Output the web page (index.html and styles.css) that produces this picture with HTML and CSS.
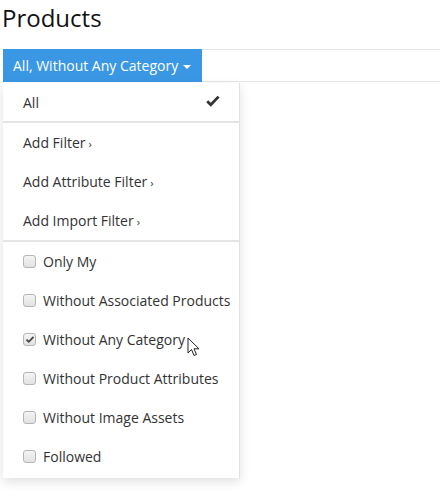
FILE: index.html
```html
<!DOCTYPE html>
<html>
<head>
<meta charset="utf-8">
<link rel="stylesheet" href="styles.css">
</head>
<body>
<div class="page">
  <h1 class="title">Products</h1>
  <div class="toolbar">
    <button class="filter-btn">All, Without Any Category <span class="caret"></span></button>
  </div>
  <div class="menu">
    <div class="menu-top">
      <span>All</span>
      <svg class="check" width="14" height="12" viewBox="0 0 14 12"><path d="M1.2 6.3 L4.8 9.8 L12.6 1.6" fill="none" stroke="#333" stroke-width="2.8" stroke-linejoin="miter"/></svg>
    </div>
    <div class="menu-section">
      <div class="item">Add Filter <span class="arrow">›</span></div>
      <div class="item">Add Attribute Filter <span class="arrow">›</span></div>
      <div class="item">Add Import Filter <span class="arrow">›</span></div>
    </div>
    <div class="menu-section">
      <div class="item"><span class="box"></span>Only My</div>
      <div class="item"><span class="box"></span>Without Associated Products</div>
      <div class="item"><span class="box checked"><svg width="10" height="9" viewBox="0 0 10 9"><path d="M1.5 4.6 L3.8 6.8 L8.5 1.8" fill="none" stroke="#444" stroke-width="1.8"/></svg></span>Without Any Category</div>
      <div class="item"><span class="box"></span>Without Product Attributes</div>
      <div class="item"><span class="box"></span>Without Image Assets</div>
      <div class="item"><span class="box"></span>Followed</div>
    </div>
  </div>
  <svg class="cursor" width="14" height="22" viewBox="0 0 14 22"><path d="M1 1 L1 16 L4.5 12.5 L7 18.5 L9.5 17.5 L7 11.8 L12 11.8 Z" fill="#fff" stroke="#222" stroke-width="1" stroke-linejoin="miter"/></svg>
</div>
</body>
</html>
```
FILE: styles.css
```css
html, body {
  margin: 0;
  padding: 0;
  background: #fff;
}
body {
  font-family: "Open Sans", "Noto Sans", sans-serif;
  color: #333;
}
.page {
  position: relative;
  width: 440px;
  height: 499px;
  overflow: hidden;
}
.title {
  margin: 0;
  padding: 3px 0 0 2px;
  height: 49px;
  box-sizing: border-box;
  font-size: 24px;
  font-weight: 400;
  line-height: 30px;
  color: #111;
}
.toolbar {
  margin-left: 3px;
  height: 33px;
  box-sizing: border-box;
  border-top: 1px solid #e6e6e6;
  border-bottom: 1px solid #e6e6e6;
  display: flex;
  align-items: stretch;
}
.filter-btn {
  margin: -1px 0 -1px 0;
  width: 199px;
  border: 0;
  padding: 0 0 0 10px;
  text-align: left;
  background: #3a97e4;
  color: #fff;
  font-family: "Open Sans", "Noto Sans", sans-serif;
  font-size: 14px;
  display: flex;
  align-items: center;
  gap: 5px;
}
.caret {
  display: inline-block;
  width: 0;
  height: 0;
  border-left: 4px solid transparent;
  border-right: 4px solid transparent;
  border-top: 4px solid #fff;
  margin-top: 2px;
}
.menu {
  position: absolute;
  left: 3px;
  top: 83px;
  width: 237px;
  height: 395px;
  box-sizing: border-box;
  background: #fff;
  border-right: 1px solid #e2e2e2;
  box-shadow: 0 4px 10px rgba(0,0,0,0.12);
  font-size: 14px;
  color: #333;
}
.menu-top {
  height: 40px;
  display: flex;
  align-items: center;
  justify-content: space-between;
  padding: 0 19px 0 20px;
  border-bottom: 2px solid #e5e5e5;
  box-sizing: border-box;
}
.check {
  margin-top: -3px;
}
.menu-section {
  border-bottom: 2px solid #e5e5e5;
}
.menu-section:last-child {
  border-bottom: 0;
}
.item {
  height: 39px;
  display: flex;
  align-items: center;
  padding-left: 20px;
  white-space: nowrap;
}
.arrow {
  font-size: 11px;
  margin-left: 3px;
  margin-top: 1px;
}
.box {
  width: 11px;
  height: 11px;
  border: 1px solid #b5b5b5;
  border-radius: 3px;
  background: linear-gradient(#f4f4f4, #e2e2e2);
  margin-right: 7px;
  display: flex;
  align-items: center;
  justify-content: center;
}
.cursor {
  position: absolute;
  left: 187px;
  top: 337px;
}
```
